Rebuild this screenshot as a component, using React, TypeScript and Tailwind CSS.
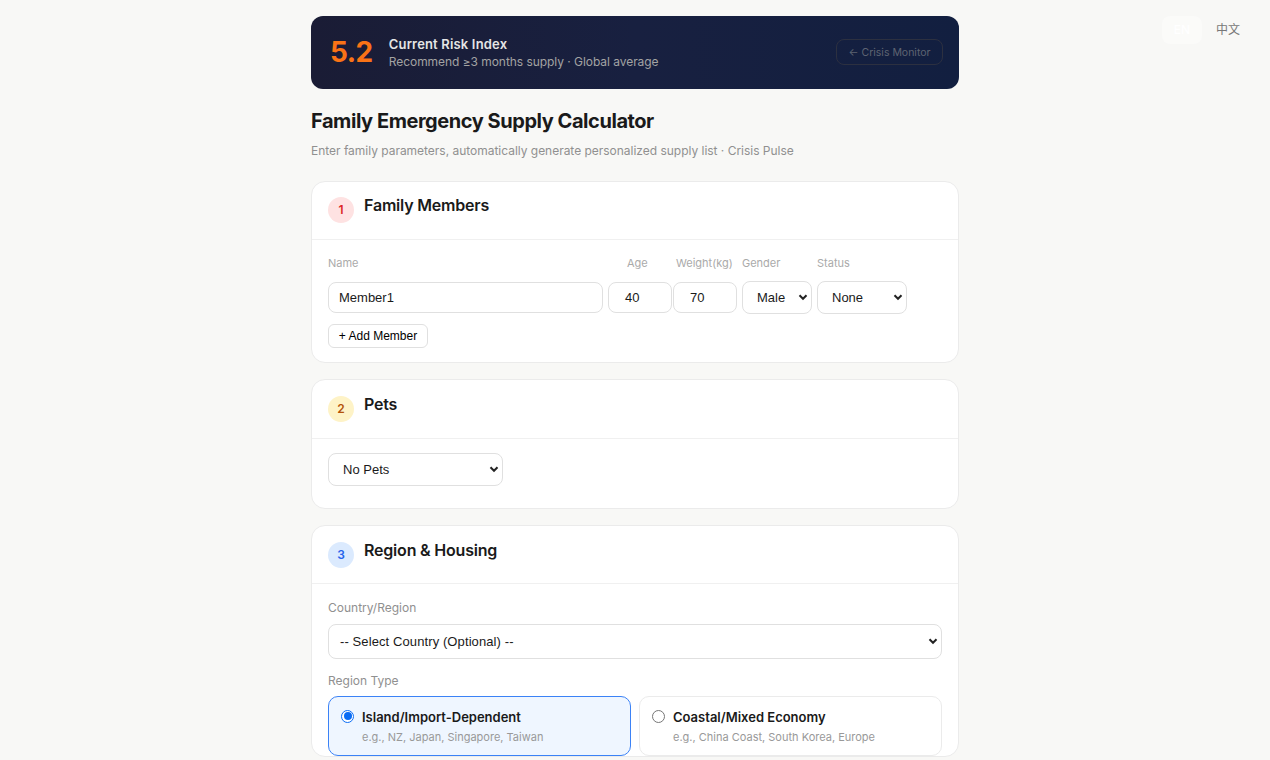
import React from 'react';

const arial = 'font-["Liberation_Sans",Arial,sans-serif]';

const inputCls = `border border-[#e0e0e0] rounded-[8px] bg-white text-[13px] text-[#1a1a1a] ${arial}`;

const Select: React.FC<{ label: string; className: string; textClass?: string }> = ({
  label,
  className,
  textClass = 'pl-[14px]',
}) => (
  <div className={`relative flex items-center ${inputCls} ${className} ${textClass}`}>
    <span>{label}</span>
    <svg
      className="absolute right-[3px] top-1/2 -translate-y-1/2"
      width="10"
      height="10"
      viewBox="0 0 10 10"
      fill="none"
      stroke="#222"
      strokeWidth="2"
    >
      <path d="M1.5 3.2 5 6.8 8.5 3.2" />
    </svg>
  </div>
);

const Section: React.FC<{
  num: number;
  title: string;
  badge: string;
  headerPad?: string;
  children: React.ReactNode;
}> = ({ num, title, badge, headerPad = 'pt-[14.5px]', children }) => (
  <div className="bg-white border border-[#ebebeb] rounded-[14px] mb-[16px]">
    <div className={`flex items-start gap-[10px] px-4 h-[58.4px] border-b border-[#f0f0f0] ${headerPad}`}>
      <div
        className={`mt-[1px] w-[26px] h-[26px] rounded-full flex items-center justify-center text-[12px] font-semibold ${badge}`}
      >
        {num}
      </div>
      <h2 className="-mt-[1px] text-[16px] leading-[20px] font-semibold tracking-[-0.2px] text-[#1a1a1a]">
        {title}
      </h2>
    </div>
    {children}
  </div>
);

const RegionCard: React.FC<{ title: string; sub: string; active?: boolean }> = ({
  title,
  sub,
  active,
}) => (
  <div
    className={`flex-1 h-[60px] rounded-[10px] border flex items-start gap-[8px] pl-[12px] pt-[12px] ${
      active ? 'border-[#3b82f6] bg-[#eff6ff]' : 'border-[#ebebeb] bg-white'
    }`}
  >
    {active ? (
      <div className="mt-[1px] w-[13px] h-[13px] rounded-full border-[1.5px] border-[#0a6cf5] bg-white flex items-center justify-center">
        <div className="w-[8px] h-[8px] rounded-full bg-[#0a6cf5]" />
      </div>
    ) : (
      <div className="mt-[1px] w-[13px] h-[13px] rounded-full border border-[#767676] bg-white" />
    )}
    <div>
      <div className="text-[13px] leading-[16px] font-semibold text-[#1a1a1a]">{title}</div>
      <div className="mt-[5px] text-[11px] leading-[14px] text-[#999]">{sub}</div>
    </div>
  </div>
);

export default function App() {
  return (
    <div
      className="relative h-[760px] overflow-hidden bg-[#f8f8f6]"
      style={{ fontFamily: 'Inter, "Noto Sans CJK SC", sans-serif' }}
    >
      <div className="absolute top-[16px] right-[20px] flex items-center h-[28px] text-[12px] gap-[4px]">
        <span className="h-[28px] flex items-center rounded-[8px] bg-white/40 px-[12px] text-white font-medium">
          EN
        </span>
        <span className="px-[10px] text-[#777]">中文</span>
      </div>

      <div className="w-[648px] mx-auto pt-4">
        <div className="h-[73px] rounded-[12px] bg-gradient-to-r from-[#1a1c35] via-[#182040] to-[#121f40] flex items-center pl-[19px] pr-4">
          <div className="mb-[2px] text-[28px] font-bold tracking-[-0.5px] text-[#f97316] leading-none">
            5.2
          </div>
          <div className="ml-[16px]">
            <div className="text-[13px] leading-[18px] font-semibold tracking-[0.17px] text-[#e5e5e5]">
              Current Risk Index
            </div>
            <div className="text-[12px] leading-[18px] tracking-[-0.05px] text-[#a3a3a3]">
              Recommend ≥3 months supply · Global average
            </div>
          </div>
          <div className="ml-auto mb-[1px] pt-[1px] h-[26px] w-[107px] rounded-[8px] border border-[#2c3040] flex items-center justify-center text-[10.5px] text-[#5e6472]">
            ← Crisis Monitor
          </div>
        </div>

        <h1 className="mt-[20px] text-[20px] leading-[24px] font-bold tracking-[-0.45px] text-[#1a1a1a]">
          Family Emergency Supply Calculator
        </h1>
        <p className="mt-[10px] mb-[21.6px] text-[12px] leading-[16px] tracking-[-0.02px] text-[#909090]">
          Enter family parameters, automatically generate personalized supply list · Crisis Pulse
        </p>

        <Section num={1} title="Family Members" badge="bg-[#fee2e2] text-[#dc2626]">
          <div className="px-4 pt-[16px] pb-[14.3px]">
            <div className="flex text-[11px] leading-[14px] text-[#aaa]">
              <div className="w-[280px]">Name</div>
              <div className="w-[65px] pl-[19px]">Age</div>
              <div className="w-[69px] pl-[3px] whitespace-nowrap">Weight(kg)</div>
              <div className="w-[75px]">Gender</div>
              <div>Status</div>
            </div>
            <div className="flex items-center mt-[11px]">
              <div className={`${inputCls} w-[275px] h-[31px] flex items-center pl-[10px]`}>
                Member1
              </div>
              <div className={`${inputCls} ml-[5px] w-[64px] h-[31px] flex items-center pl-[16px]`}>
                40
              </div>
              <div className={`${inputCls} ml-[1px] w-[64px] h-[31px] flex items-center pl-[16px]`}>
                70
              </div>
              <Select label="Male" className="ml-[5px] w-[70px] h-[33px]" />
              <Select label="None" className="ml-[5px] w-[90px] h-[33px]" />
            </div>
            <div
              className={`mt-[10px] w-[100px] h-[24px] rounded-[6px] border border-[#e0e0e0] flex items-center justify-center text-[12px] text-black ${arial}`}
            >
              + Add Member
            </div>
          </div>
        </Section>

        <Section num={2} title="Pets" badge="bg-[#fef3c7] text-[#b45309]">
          <div className="px-4 pt-[14.3px] pb-[22px]">
            <Select label="No Pets" className="w-[175px] h-[33px]" />
          </div>
        </Section>

        <Section
          num={3}
          title="Region & Housing"
          badge="bg-[#dbeafe] text-[#2563eb]"
          headerPad="pt-[15.5px]"
        >
          <div className="px-4 pt-[15.6px]">
            <div className="text-[12px] leading-[16px] text-[#909090]">Country/Region</div>
            <Select
              label="-- Select Country (Optional) --"
              className="mt-[8px] w-full h-[35px]"
              textClass="pl-[11px] tracking-[0.1px]"
            />
            <div className="mt-[14px] text-[12px] leading-[16px] text-[#909090]">Region Type</div>
            <div className="mt-[7px] flex gap-[8px]">
              <RegionCard
                active
                title="Island/Import-Dependent"
                sub="e.g., NZ, Japan, Singapore, Taiwan"
              />
              <RegionCard
                title="Coastal/Mixed Economy"
                sub="e.g., China Coast, South Korea, Europe"
              />
            </div>
          </div>
        </Section>
      </div>
    </div>
  );
}
